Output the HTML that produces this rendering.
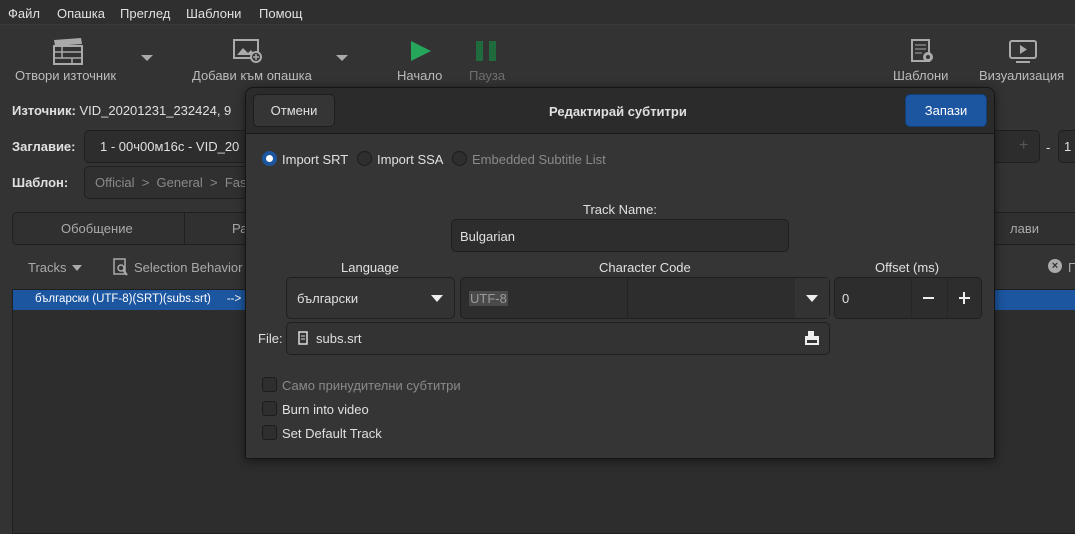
<!DOCTYPE html>
<html><head><meta charset="utf-8"><style>
*{box-sizing:border-box;margin:0;padding:0}
body{width:1075px;height:528px;overflow:hidden;background:#333333;font-family:"Liberation Sans","DejaVu Sans",sans-serif;font-size:13px;color:#e0e0e0;position:relative}
.a{position:absolute;white-space:nowrap}
.box{position:absolute;border:1px solid #1f1f1f;border-radius:5px;background:#2d2d2d}
.dim{color:#8a8a8a}
.cb{position:absolute;width:15px;height:15px;border:1px solid #1c1c1c;border-radius:3px;background:#2e2e2e}
.rd{position:absolute;width:15px;height:15px;border:1px solid #1c1c1c;border-radius:50%;background:#2e2e2e}
</style></head><body>
<div class="a" style="left:0;top:0;width:1075px;height:25px;background:#2f2f2f;border-bottom:1px solid #3a3a3a"></div>
<div class="a" style="left:8px;top:6px">Файл</div>
<div class="a" style="left:57px;top:6px">Опашка</div>
<div class="a" style="left:120px;top:6px">Преглед</div>
<div class="a" style="left:186px;top:6px">Шаблони</div>
<div class="a" style="left:259px;top:6px">Помощ</div>
<svg class="a" style="left:52px;top:36px" width="32" height="30" viewBox="0 0 32 30"><rect x="2" y="10" width="28" height="18" fill="none" stroke="#aaa" stroke-width="2"/><path d="M2 16h28M2 22h28M10 16v6M20 22v6M10 10v6" stroke="#aaa" stroke-width="1.5"/><path d="M2 4l27-2 1 6-27 2z" fill="#aaa"/></svg>
<div class="a" style="left:15px;top:68px;color:#bbb">Отвори източник</div>
<div class="a" style="left:141px;top:55px;border:6px solid transparent;border-top:6px solid #aaa"></div>
<svg class="a" style="left:232px;top:38px" width="32" height="26" viewBox="0 0 32 26"><rect x="2" y="2" width="24" height="18" fill="none" stroke="#aaa" stroke-width="2"/><path d="M5 17l6-7 5 5 3-3 4 5z" fill="#aaa"/><circle cx="24" cy="19" r="5" fill="#333" stroke="#aaa" stroke-width="2"/><path d="M24 16v6M21 19h6" stroke="#aaa" stroke-width="1.5"/></svg>
<div class="a" style="left:192px;top:68px;color:#bbb">Добави към опашка</div>
<div class="a" style="left:336px;top:55px;border:6px solid transparent;border-top:6px solid #aaa"></div>
<svg class="a" style="left:410px;top:40px" width="22" height="22"><path d="M1 1L21 11L1 21z" fill="#26a65b"/></svg>
<div class="a" style="left:397px;top:68px;color:#bbb">Начало</div>
<div class="a" style="left:476px;top:41px;width:7px;height:20px;background:#1f6b3d"></div>
<div class="a" style="left:489px;top:41px;width:7px;height:20px;background:#1f6b3d"></div>
<div class="a" style="left:469px;top:68px;color:#6f6f6f">Пауза</div>
<svg class="a" style="left:910px;top:38px" width="24" height="26"><rect x="2" y="2" width="17" height="21" fill="none" stroke="#aaa" stroke-width="2"/><path d="M5 7h11M5 11h11M5 15h7" stroke="#aaa"/><circle cx="18" cy="19" r="5" fill="#aaa"/><circle cx="18" cy="19" r="2" fill="#333"/></svg>
<div class="a" style="left:893px;top:68px;color:#bbb">Шаблони</div>
<svg class="a" style="left:1008px;top:39px" width="30" height="26"><rect x="2" y="2" width="26" height="17" rx="2" fill="none" stroke="#aaa" stroke-width="2"/><path d="M12 6l7 4.5-7 4.5z" fill="#aaa"/><path d="M8 23h14" stroke="#aaa" stroke-width="2"/></svg>
<div class="a" style="left:979px;top:68px;color:#bbb">Визуализация</div>
<div class="a" style="left:12px;top:103px"><b>Източник:</b> VID_20201231_232424, 9</div>
<div class="a" style="left:12px;top:139px"><b>Заглавие:</b></div>
<div class="box" style="left:84px;top:130px;width:200px;height:33px"></div>
<div class="a" style="left:100px;top:139px">1 - 00ч00м16с - VID_20</div>
<div class="a" style="left:12px;top:175px"><b>Шаблон:</b></div>
<div class="box" style="left:84px;top:166px;width:200px;height:33px;background:#303030"></div>
<div class="a dim" style="left:95px;top:175px">Official &nbsp;&gt;&nbsp; General &nbsp;&gt;&nbsp; Fas</div>
<div class="box" style="left:980px;top:130px;width:60px;height:33px"></div>
<div class="a" style="left:1019px;top:137px;color:#555;font-size:16px">+</div>
<div class="a" style="left:1046px;top:140px">-</div>
<div class="box" style="left:1058px;top:130px;width:30px;height:33px"></div>
<div class="a" style="left:1064px;top:139px">1</div>
<div class="box" style="left:12px;top:212px;width:1070px;height:33px;background:#303030"></div>
<div class="a" style="left:184px;top:212px;width:1px;height:33px;background:#1f1f1f"></div>
<div class="a" style="left:61px;top:221px;color:#aaa">Обобщение</div>
<div class="a" style="left:232px;top:221px;color:#aaa">Ра</div>
<div class="a" style="left:1010px;top:221px;color:#aaa">лави</div>
<div class="a" style="left:28px;top:260px;color:#aaa">Tracks</div>
<div class="a" style="left:72px;top:265px;border:5px solid transparent;border-top:6px solid #aaa"></div>
<svg class="a" style="left:113px;top:258px" width="16" height="18"><rect x="1" y="1" width="11" height="15" fill="none" stroke="#aaa" stroke-width="1.5"/><circle cx="8" cy="10" r="3" fill="none" stroke="#aaa" stroke-width="1.5"/><path d="M10 12l4 5" stroke="#aaa" stroke-width="2"/></svg>
<div class="a" style="left:134px;top:260px;color:#aaa">Selection Behavior</div>
<div class="a" style="left:1048px;top:259px;width:14px;height:14px;border-radius:50%;background:#aaa;color:#333;font-size:11px;text-align:center;line-height:14px;font-weight:bold">×</div>
<div class="a" style="left:1068px;top:260px;color:#aaa">П</div>
<div class="a" style="left:12px;top:289px;width:1070px;height:245px;background:#2d2d2d;border:1px solid #1f1f1f"></div>
<div class="a" style="left:13px;top:290px;width:1062px;height:20px;background:#1c56a0"></div>
<div class="a" style="left:35px;top:293px;font-size:11.5px;color:#fff">български (UTF-8)(SRT)(subs.srt) &nbsp;&nbsp;&nbsp; --&gt;</div>
<div class="a" style="left:245px;top:87px;width:750px;height:372px;background:#353535;border:1px solid #151515;border-radius:8px 8px 0 0;box-shadow:0 2px 10px rgba(0,0,0,.5)"></div>
<div class="a" style="left:246px;top:88px;width:748px;height:46px;background:#2b2b2b;border-bottom:1px solid #161616;border-radius:7px 7px 0 0"></div>
<div class="a" style="left:253px;top:94px;width:82px;height:33px;background:#353535;border:1px solid #1d1d1d;border-radius:5px;text-align:center;line-height:31px">Отмени</div>
<div class="a" style="left:549px;top:104px;font-weight:bold">Редактирай субтитри</div>
<div class="a" style="left:905px;top:94px;width:82px;height:33px;background:#1c56a0;border:1px solid #133e78;border-radius:5px;text-align:center;line-height:31px;color:#fff">Запази</div>
<div class="rd" style="left:262px;top:151px;background:#fff;border:4px solid #1c56a0"></div>
<div class="a" style="left:282px;top:152px">Import SRT</div>
<div class="rd" style="left:357px;top:151px"></div>
<div class="a" style="left:377px;top:152px">Import SSA</div>
<div class="rd" style="left:452px;top:151px"></div>
<div class="a dim" style="left:472px;top:152px">Embedded Subtitle List</div>
<div class="a" style="left:583px;top:202px">Track Name:</div>
<div class="box" style="left:451px;top:219px;width:338px;height:33px"></div>
<div class="a" style="left:460px;top:229px">Bulgarian</div>
<div class="a" style="left:341px;top:260px">Language</div>
<div class="a" style="left:599px;top:260px">Character Code</div>
<div class="a" style="left:875px;top:260px">Offset (ms)</div>
<div class="box" style="left:286px;top:277px;width:169px;height:42px;background:#333"></div>
<div class="a" style="left:297px;top:291px">български</div>
<div class="a" style="left:431px;top:295px;border:6px solid transparent;border-top:7px solid #eee"></div>
<div class="box" style="left:460px;top:277px;width:370px;height:42px"></div>
<div class="a" style="left:627px;top:278px;width:1px;height:40px;background:#222"></div>
<div class="a" style="left:795px;top:278px;width:34px;height:40px;background:#333"></div>
<div class="a" style="left:806px;top:295px;border:6px solid transparent;border-top:7px solid #eee"></div>
<div class="a" style="left:469px;top:291px;background:#4a4a4a;color:#999;padding:0 1px">UTF-8</div>
<div class="box" style="left:834px;top:277px;width:148px;height:42px"></div>
<div class="a" style="left:911px;top:278px;width:1px;height:40px;background:#262626"></div>
<div class="a" style="left:947px;top:278px;width:1px;height:40px;background:#262626"></div>
<div class="a" style="left:842px;top:291px">0</div>
<div class="a" style="left:923px;top:297px;width:11px;height:2px;background:#eee"></div>
<div class="a" style="left:959px;top:297px;width:11px;height:2px;background:#eee"></div>
<div class="a" style="left:963px;top:292px;width:2px;height:12px;background:#eee"></div>
<div class="a" style="left:258px;top:331px">File:</div>
<div class="box" style="left:286px;top:322px;width:544px;height:33px;background:#333"></div>
<svg class="a" style="left:298px;top:331px" width="10" height="14"><rect x="1" y="1" width="8" height="12" fill="none" stroke="#ddd" stroke-width="1.5"/><path d="M3 5h4M3 8h4" stroke="#ddd"/></svg>
<div class="a" style="left:316px;top:331px">subs.srt</div>
<svg class="a" style="left:804px;top:330px" width="16" height="16"><path d="M4 1h6v5h5v9H1V6h3z" fill="#eee"/><rect x="3" y="10" width="10" height="3" fill="#333"/></svg>
<div class="cb" style="left:262px;top:377px"></div>
<div class="a dim" style="left:282px;top:378px">Само принудителни субтитри</div>
<div class="cb" style="left:262px;top:401px"></div>
<div class="a" style="left:282px;top:402px">Burn into video</div>
<div class="cb" style="left:262px;top:425px"></div>
<div class="a" style="left:282px;top:426px">Set Default Track</div>
</body></html>
